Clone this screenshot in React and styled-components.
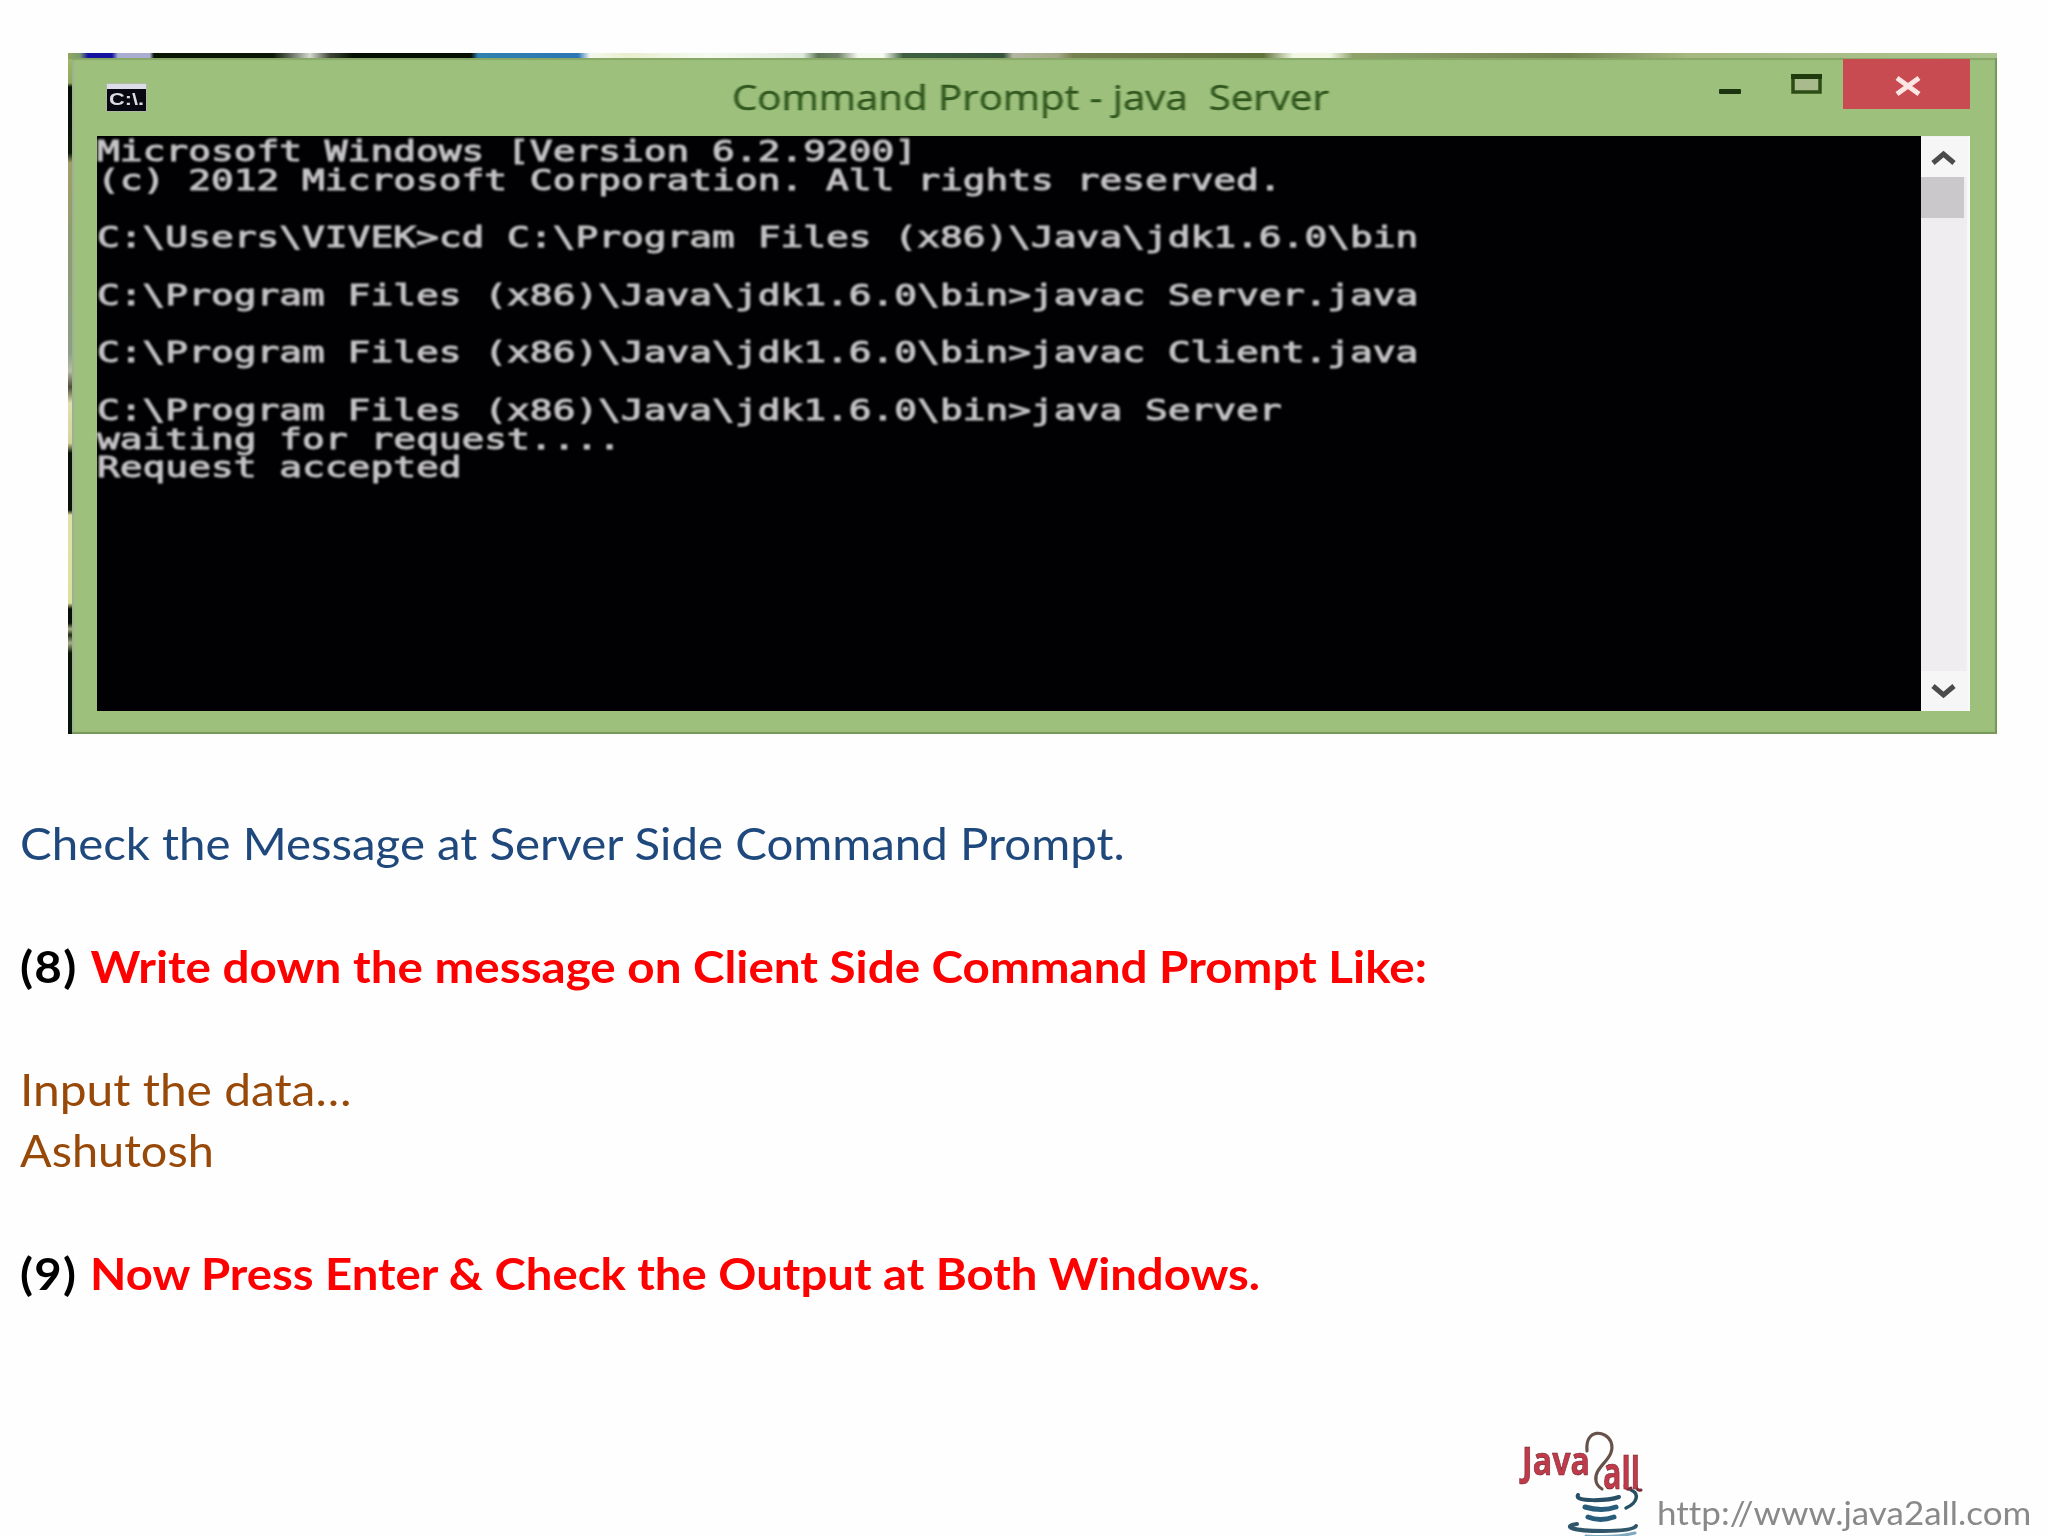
import React from 'react'
import styled, { createGlobalStyle } from 'styled-components'

const green = '#9dc07c';
const navy = '#1f497d';
const brown = '#984807';
const red = '#ff0000';

const GlobalStyle = createGlobalStyle`
    * { box-sizing : border-box; }
    body { margin : 0; background : #fefefe; }
`

const Slide = styled.main`
    width : 2048px;
    height : 1536px;
    display : flex;
    flex-direction : column;
    overflow : hidden;
    background : #fefefe;
`

/* the strip of desktop that shows above and left of the window */
const Desktop = styled.section`
    width : 1929px;
    height : 681px;
    margin : 53px 0 0 68px;
    padding : 5px 0 0 4px;
    flex : none;
    background :
        linear-gradient(to right, #8fa860 0px, #7a9a70 12px, #1414a0 20px, #1414a0 44px, #a9aed0 50px, #a9aed0 82px,
            #0a1503 86px, #0a1503 205px, #555f50 220px, #d5dad2 242px, #3c4535 262px, #061002 285px, #061002 403px,
            #3080b0 410px, #2b76b4 510px, #f4f8ee 522px, #e8efcd 560px, #f6fbf2 640px, #dfeadb 735px, #5d7555 750px,
            #70836a 770px, #f6fbf2 790px, #f6fbf2 815px, #3f6040 835px, #35533a 935px, #b3b6a0 945px, #a5a886 990px,
            #75804f 1005px, #60713a 1195px, #f2f8e4 1225px, #f2f8e4 1262px, #8ea26a 1285px, #718350 1500px,
            #a4b87f 1620px, #abc48e 1929px) 0 0 / 100% 6px no-repeat,
        linear-gradient(to bottom, #a1bc67 0px, #8fa860 30px, #050c02 34px, #0c1806 100px, #a29e68 110px, #8f9c70 180px,
            #8c9f86 300px, #b8bda6 318px, #4a4f35 334px, #dfdfb0 350px, #d5d29c 390px, #0a1205 400px, #0a1205 457px,
            #dfe2a6 462px, #dce09c 550px, #080f04 556px, #080f04 570px, #a9b083 576px, #222b14 582px, #a9b083 590px,
            #0a1505 600px, #06140a 681px);
`

const Window = styled.div`
    height : 100%;
    display : flex;
    flex-direction : column;
    padding : 0 27px 23px 25px;
    background : ${green};
    box-shadow : inset -2px -2px 1px #75975a, inset 0 2px 1px #87a766, inset 2px 0 2px #a1b195;
`

const TitleBar = styled.header`
    height : 78px;
    flex : none;
    display : flex;
    align-items : flex-start;
`

const PromptIcon = styled.svg`
    width : 42px;
    height : 30px;
    margin : 25px 0 0 9px;
    flex : none;
    filter : blur(0.5px);
`

const TitleText = styled.h1`
    width : 967px;
    margin : 14.5px 0 0 584px;
    font : 400 35px/48px "Open Sans", sans-serif;
    color : #31581f;
    white-space : pre;
    transform : scaleX(${p => p.$stretch});
    transform-origin : left;
    filter : blur(0.7px);
    -webkit-text-stroke : 0.4px #31581f;
`

const Controls = styled.div`
    display : flex;
    margin : 1px 0 0 auto;
`

const ControlIcon = styled.svg`
    width : 84px;
    height : 50px;
    filter : blur(0.7px);
`

const CloseButton = styled.button`
    width : 127px;
    height : 50px;
    padding : 3px 0 0 3px;
    border : none;
    display : flex;
    align-items : center;
    justify-content : center;
    background : #c74b50;
    filter : blur(0.6px);
`

const Body = styled.div`
    flex : 1;
    display : flex;
    min-height : 0;
`

const Console = styled.div`
    flex : 1;
    padding-top : 1px;
    background : #010002;
`

const ConsoleLine = styled.pre`
    width : max-content;
    height : 28.75px;
    margin : 0;
    font : 400 27.5px/28.75px "DejaVu Sans Mono", monospace;
    color : #c4c2c4;
    -webkit-text-stroke : 1px #c4c2c4;
    transform : scaleX(1.376);
    transform-origin : left;
    filter : blur(0.8px);
`

const ScrollBar = styled.div`
    width : 49px;
    display : flex;
    flex-direction : column;
    background : #efedf0;
    box-shadow : inset -3px 0 2px #f8fbf5;
`

const Arrow = styled.svg`
    width : 46px;
    height : 40px;
    flex : none;
    margin-top : ${p => p.$down ? 'auto' : '1px'};
    background : #f6f6f6;
    filter : blur(0.6px);
`

const Thumb = styled.div`
    width : 43px;
    height : 41px;
    background : #cac8cb;
`

const Notes = styled.section`
    margin : 78px 0 0 20px;
    flex : 1;
`

const NoteLine = styled.p`
    width : max-content;
    height : 61.45px;
    margin : 0;
    font : ${p => p.$bold ? 700 : 400} 44.5px/61.45px Lato, sans-serif;
    color : ${p => p.$color};
    white-space : pre;
    transform : scaleX(${p => p.$stretch || 1});
    transform-origin : left;
`

const StepNumber = styled.span`
    color : #000;
    letter-spacing : 1.2px;
`

const Footer = styled.footer`
    height : 106px;
    flex : none;
    display : flex;
    align-items : flex-start;
    padding-left : 1516px;
`

const Logo = styled.svg`
    width : 132px;
    height : 106px;
    flex : none;
    overflow : visible;
    filter : blur(0.7px);
`

const SiteUrl = styled.span`
    margin : 60px 0 0 9px;
    font : 400 33px/44px Lato, sans-serif;
    font-variant-ligatures : none;
    color : #898989;
    white-space : pre;
    transform : scaleX(${p => p.$stretch});
    transform-origin : left;
`

const consoleLines = [
    'Microsoft Windows [Version 6.2.9200]',
    '(c) 2012 Microsoft Corporation. All rights reserved.',
    '',
    'C:\\Users\\VIVEK>cd C:\\Program Files (x86)\\Java\\jdk1.6.0\\bin',
    '',
    'C:\\Program Files (x86)\\Java\\jdk1.6.0\\bin>javac Server.java',
    '',
    'C:\\Program Files (x86)\\Java\\jdk1.6.0\\bin>javac Client.java',
    '',
    'C:\\Program Files (x86)\\Java\\jdk1.6.0\\bin>java Server',
    'waiting for request....',
    'Request accepted',
]

const notes = [
    { text : 'Check the Message at Server Side Command Prompt.', color : navy, stretch : 1.0655 },
    { text : '' },
    { step : '(8) ', text : 'Write down the message on Client Side Command Prompt Like:', color : red, stretch : 1.069 },
    { text : '' },
    { text : 'Input the data…', color : brown, stretch : 1.076 },
    { text : 'Ashutosh', color : brown, stretch : 1.052 },
    { text : '' },
    { step : '(9) ', text : 'Now Press Enter & Check the Output at Both Windows.', color : red, stretch : 1.0625 },
]

const JavaLogo = () => (
    <Logo viewBox='1516 1430 132 106'>
        <g fill='none' strokeLinecap='round'>
            <path d='M1587 1451 C1585 1428 1606 1430 1611 1442 C1617 1459 1593 1466 1596 1481 Q1597 1486 1602 1489' stroke='#675249' strokeWidth='3.2' />
            <path d='M1578 1495 C1573 1502 1608 1501 1619 1497' stroke='#294f66' strokeWidth='4' />
            <path d='M1585 1507 Q1602 1512 1616 1507' stroke='#285c7b' strokeWidth='5' />
            <path d='M1588 1517 Q1600 1522 1614 1517' stroke='#285c7b' strokeWidth='5' />
            <path d='M1577 1524 C1562 1526 1571 1531 1603 1531 C1624 1531 1634 1529 1636 1526' stroke='#31566a' strokeWidth='4' />
            <path d='M1586 1536 Q1615 1538 1635 1533' stroke='#7fa9bf' strokeWidth='3' />
            <path d='M1631 1490 C1640 1494 1637 1503 1626 1508' stroke='#285065' strokeWidth='3.5' />
            <path d='M1625 1486 Q1627 1491 1631 1488 M1636 1486 Q1637 1491 1641 1490' stroke='#7a2e38' strokeWidth='3' />
        </g>
        <g fontFamily='"Open Sans", sans-serif' fontWeight='700' fill='#c03a49' stroke='#6d2630' strokeWidth='0.6'>
            <text x='1522' y='1475' fontSize='39' textLength='68' lengthAdjust='spacingAndGlyphs'>Java</text>
            <text x='1603' y='1489' fontSize='45' textLength='37' lengthAdjust='spacingAndGlyphs'>all</text>
        </g>
    </Logo>
)

const App = () => {
    return (
        <>
            <GlobalStyle />
            <Slide>
                <Desktop>
                    <Window>
                        <TitleBar>
                            <PromptIcon viewBox='0 0 42 30'>
                                <rect x='0' y='0' width='41' height='29' fill='#aeb9a4' />
                                <rect x='1' y='1' width='39' height='6' fill='#dcdce8' />
                                <rect x='1' y='6' width='39' height='22' fill='#080812' />
                                <text x='3' y='22' fontFamily='"Liberation Sans", sans-serif' fontWeight='700' fontSize='16' fill='#dcdce0' textLength='35' lengthAdjust='spacingAndGlyphs'>C:\.</text>
                            </PromptIcon>
                            <TitleText $stretch={1.149}>Command Prompt - java  Server</TitleText>
                            <Controls>
                                <ControlIcon viewBox='0 0 84 50'>
                                    <rect x='44' y='30' width='22' height='5' rx='1' fill='#1c3510' />
                                </ControlIcon>
                                <ControlIcon viewBox='0 0 84 50'>
                                    <rect x='34' y='18' width='27' height='15' fill='#a9bb8d' stroke='#2c4e16' strokeWidth='3.5' />
                                    <path d='M32 17.5 H63' stroke='#1e3c0c' strokeWidth='5' />
                                </ControlIcon>
                                <CloseButton>
                                    <svg width='28' height='22' viewBox='0 0 28 22'>
                                        <path d='M3 3 L25 19 M25 3 L3 19' stroke='#fbe6e4' strokeWidth='5' />
                                    </svg>
                                </CloseButton>
                            </Controls>
                        </TitleBar>
                        <Body>
                            <Console>
                                {consoleLines.map((line, i) => <ConsoleLine key={i}>{line}</ConsoleLine>)}
                            </Console>
                            <ScrollBar>
                                <Arrow viewBox='0 0 46 40'>
                                    <path d='M12 26 L22.500 17 L33 26' fill='none' stroke='#4b4b4b' strokeWidth='5' />
                                </Arrow>
                                <Thumb />
                                <Arrow $down viewBox='0 0 46 40'>
                                    <path d='M12 15 L22.500 24 L33 15' fill='none' stroke='#4b4b4b' strokeWidth='5' />
                                </Arrow>
                            </ScrollBar>
                        </Body>
                    </Window>
                </Desktop>
                <Notes>
                    {notes.map((note, i) => (
                        <NoteLine key={i} $bold={!!note.step} $color={note.color} $stretch={note.stretch}>
                            {note.step && <StepNumber>{note.step}</StepNumber>}{note.text}
                        </NoteLine>
                    ))}
                </Notes>
                <Footer>
                    <JavaLogo />
                    <SiteUrl $stretch={1.06}>http://www.java2all.com</SiteUrl>
                </Footer>
            </Slide>
        </>
    )
}

export default App
